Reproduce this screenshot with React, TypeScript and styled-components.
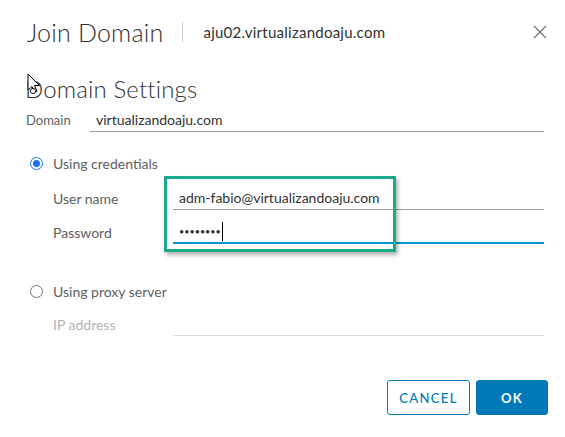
import styled, { createGlobalStyle } from "styled-components";

const GlobalStyle = createGlobalStyle`
  html, body {
    margin: 0;
    padding: 0;
    background: #ffffff;
  }
  body {
    font-family: Lato, "Open Sans", sans-serif;
    color: #313131;
  }
`;

const Dialog = styled.div`
  position: relative;
  width: 565px;
  height: 437px;
  box-sizing: border-box;
  padding: 14px 17px 0 24px;
  display: flex;
  flex-direction: column;
  background: #ffffff;
  overflow: hidden;
`;

const Header = styled.div`
  display: flex;
  align-items: center;
  height: 36px;
`;

const Title = styled.h1`
  margin: 0 0 0 3px;
  font-size: 25px;
  font-weight: 300;
  color: #313131;
  letter-spacing: 0.2px;
`;

const Divider = styled.div`
  width: 1px;
  height: 20px;
  background: #cccccc;
  margin: 0 20px 0 19px;
`;

const Subtitle = styled.span`
  font-size: 15px;
  letter-spacing: 0.25px;
  color: #313131;
  flex: 1;
`;

const CloseButton = styled.button`
  border: none;
  background: none;
  padding: 0;
  width: 14px;
  height: 14px;
  display: flex;
  cursor: pointer;
  margin-right: 1px;
`;

const SectionTitle = styled.h2`
  margin: 24px 0 0 1px;
  height: 30px;
  line-height: 30px;
  font-size: 24px;
  font-weight: 300;
  color: #313131;
  letter-spacing: 0.15px;
`;

const Row = styled.div<{ $top: number; $indent?: number; $labelWidth: number }>`
  display: flex;
  align-items: stretch;
  margin: ${(p) => p.$top}px 4px 0 0;
  padding-left: ${(p) => p.$indent ?? 0}px;
  height: 24px;
  & > label {
    width: ${(p) => p.$labelWidth}px;
  }
`;

const Label = styled.label<{ $muted?: boolean; $small?: boolean }>`
  flex-shrink: 0;
  display: flex;
  align-items: center;
  font-size: ${(p) => (p.$small ? 13 : 14)}px;
  color: ${(p) => (p.$muted ? "#b3b3b3" : "#5e5e5e")};
`;

const Field = styled.div<{ $line: string; $thick?: boolean }>`
  flex: 1;
  display: flex;
  align-items: center;
  padding-left: 6px;
  font-size: 14px;
  color: #313131;
  border-bottom: ${(p) => (p.$thick ? 2 : 1)}px solid ${(p) => p.$line};
`;

const Dots = styled.span`
  font-size: 9px;
  letter-spacing: 0;
  color: #313131;
`;

const Caret = styled.span`
  display: inline-block;
  width: 1px;
  height: 19px;
  background: #000000;
  margin-left: 1px;
`;

const RadioRow = styled.div<{ $top: number }>`
  display: flex;
  align-items: center;
  height: 20px;
  margin-top: ${(p) => p.$top}px;
  padding-left: 6px;
  font-size: 14px;
  color: #5e5e5e;
`;

const RadioDot = styled.span<{ $checked?: boolean }>`
  width: 13px;
  height: 13px;
  box-sizing: border-box;
  border-radius: 50%;
  border: ${(p) => (p.$checked ? "1.5px solid #1a73e8" : "1px solid #767676")};
  margin-right: 10px;
  display: flex;
  align-items: center;
  justify-content: center;
  &::after {
    content: "";
    display: ${(p) => (p.$checked ? "block" : "none")};
    width: 7px;
    height: 7px;
    border-radius: 50%;
    background: #1a73e8;
  }
`;

const Footer = styled.div`
  display: flex;
  justify-content: flex-end;
  gap: 6px;
  margin-top: 44px;
`;

const Button = styled.button<{ $primary?: boolean }>`
  height: 35px;
  box-sizing: border-box;
  padding: 0;
  width: ${(p) => (p.$primary ? 72 : 83)}px;
  border-radius: 3px;
  border: 1px solid #0079b8;
  background: ${(p) => (p.$primary ? "#0079b8" : "#ffffff")};
  color: ${(p) => (p.$primary ? "#ffffff" : "#0079b8")};
  font-family: Lato, "Open Sans", sans-serif;
  font-size: 13px;
  font-weight: ${(p) => (p.$primary ? 700 : 500)};
  letter-spacing: 1.4px;
  cursor: pointer;
`;

const Highlight = styled.div`
  position: absolute;
  left: 164px;
  top: 176px;
  width: 232px;
  height: 76px;
  box-sizing: border-box;
  border: 3px solid #17ab8c;
  box-shadow: 2px 3px 4px rgba(0, 0, 0, 0.3);
  pointer-events: none;
`;

const Pointer = styled.svg`
  position: absolute;
  left: 27px;
  top: 73px;
`;

const App = () => {
  return (
    <>
      <GlobalStyle />
      <Dialog>
        <Header>
          <Title>Join Domain</Title>
          <Divider />
          <Subtitle>aju02.virtualizandoaju.com</Subtitle>
          <CloseButton aria-label="Close">
            <svg width="14" height="14" viewBox="0 0 14 14">
              <path d="M1 1 L13 13 M13 1 L1 13" stroke="#747474" strokeWidth="1.3" fill="none" />
            </svg>
          </CloseButton>
        </Header>

        <SectionTitle>Domain Settings</SectionTitle>

        <Row $top={4} $labelWidth={64} $indent={2}>
          <Label $small>Domain</Label>
          <Field $line="#9a9a9a">virtualizandoaju.com</Field>
        </Row>

        <RadioRow $top={21}>
          <RadioDot $checked />
          Using credentials
        </RadioRow>

        <Row $top={13} $indent={29} $labelWidth={120}>
          <Label>User name</Label>
          <Field $line="#9a9a9a">adm-fabio@virtualizandoaju.com</Field>
        </Row>

        <Row $top={10} $indent={29} $labelWidth={120}>
          <Label>Password</Label>
          <Field $line="#0095d3" $thick>
            <Dots>••••••••</Dots>
            <Caret />
          </Field>
        </Row>

        <RadioRow $top={37}>
          <RadioDot />
          Using proxy server
        </RadioRow>

        <Row $top={11} $indent={29} $labelWidth={120}>
          <Label $muted>IP address</Label>
          <Field $line="#dddddd" />
        </Row>

        <Footer>
          <Button>CANCEL</Button>
          <Button $primary>OK</Button>
        </Footer>

        <Highlight />
        <Pointer width="14" height="22" viewBox="0 0 14 22">
          <path
            d="M1 1 L1 17 L5 13.5 L7.5 19.5 L10 18.5 L7.5 12.5 L12.5 12.5 Z"
            fill="#ffffff"
            stroke="#000000"
            strokeWidth="1"
            strokeLinejoin="round"
          />
          <circle cx="6" cy="18" r="2.6" fill="#ffffff" stroke="#000000" strokeWidth="0.9" />
        </Pointer>
      </Dialog>
    </>
  );
};

export default App;
